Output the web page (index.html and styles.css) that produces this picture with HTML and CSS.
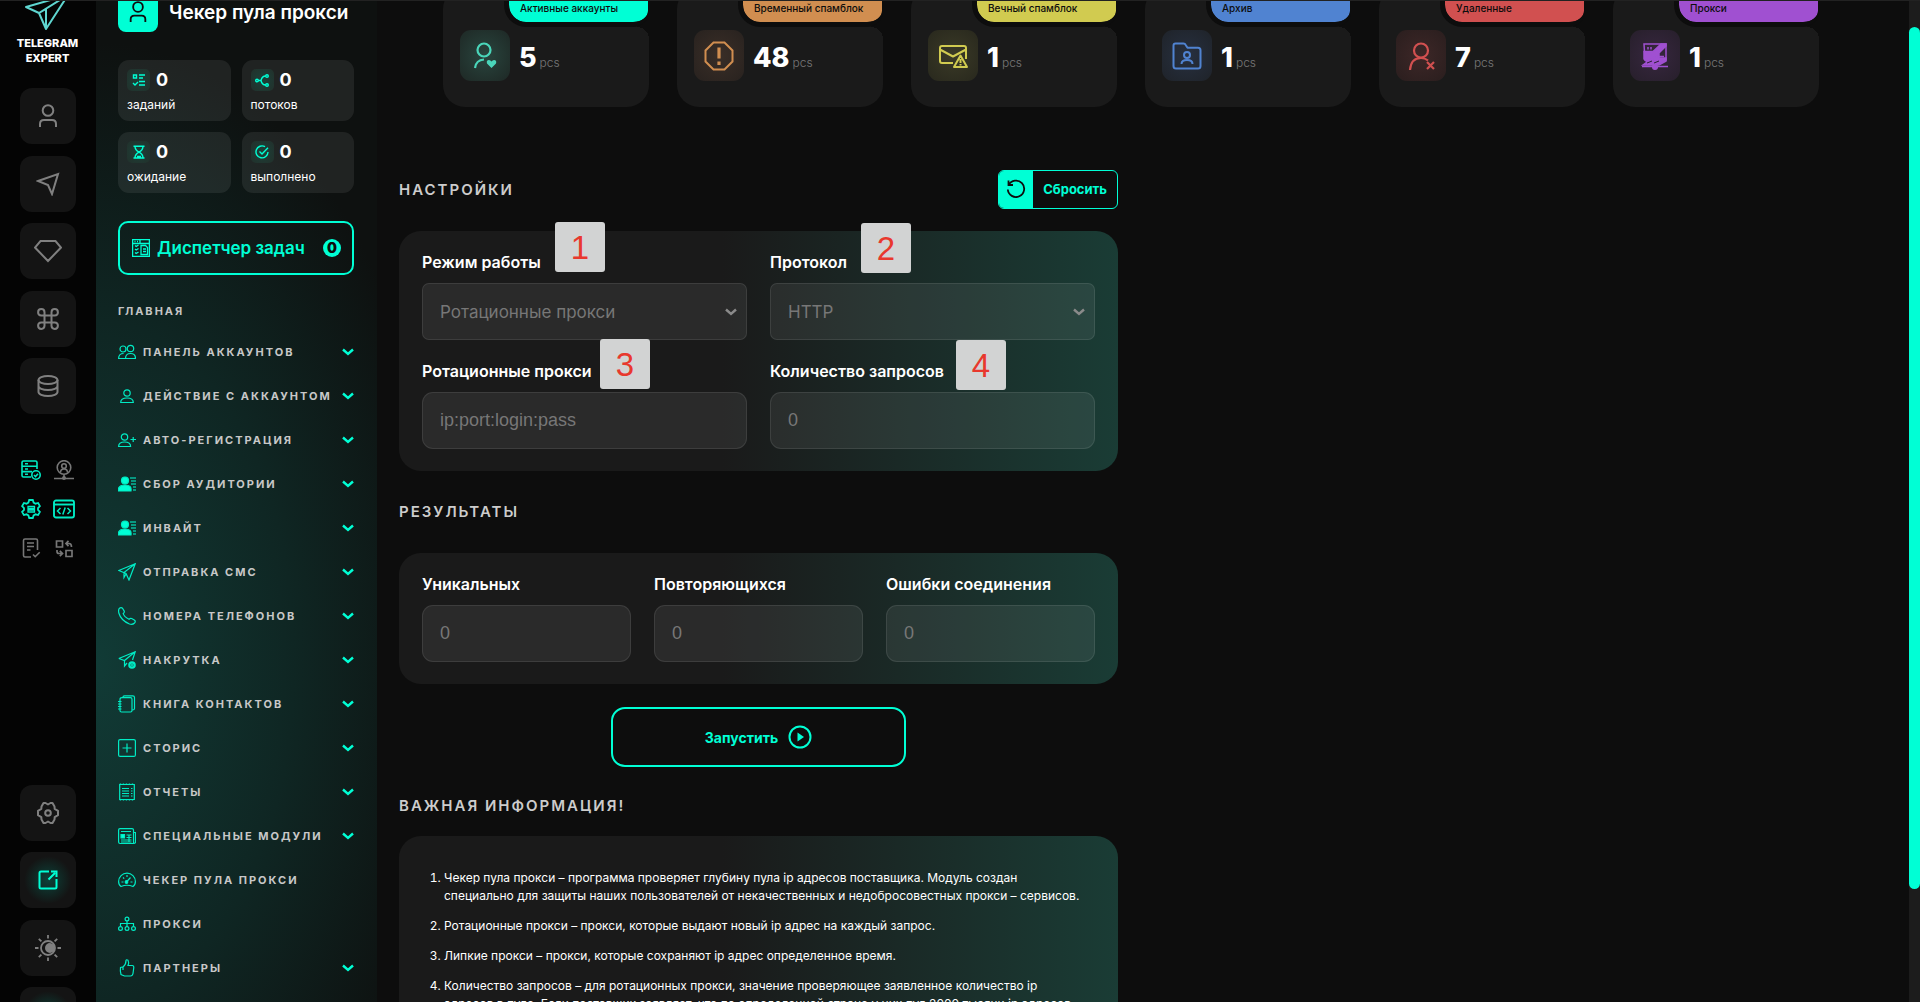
FILE: index.html
```html
<!DOCTYPE html>
<html lang="ru">
<head>
    <meta charset="UTF-8">
    <meta name="viewport" content="width=device-width, initial-scale=1.0">
    <title>Чекер пула прокси</title>
    <link rel="stylesheet" href="styles.css">
</head>
<body>

<!-- shared icons -->
<svg class="sprite" aria-hidden="true">
    <symbol id="chevron" viewBox="0 0 12 8"><path d="M1 1.5l5 4.500 5-4.500" fill="none" stroke="currentColor" stroke-width="2.400"/></symbol>
    <symbol id="user" viewBox="0 0 24 24"><circle cx="12" cy="6.500" r="5.300" fill="none" stroke="currentColor" stroke-width="2"/><path d="M4 23v-3q0-4 4-4h8q4 0 4 4v3" fill="none" stroke="currentColor" stroke-width="2"/></symbol>
    <symbol id="audience" viewBox="0 0 18 18"><circle cx="7" cy="5.500" r="3.500" fill="currentColor"/><path d="M0 16q0-6 7-6t6 6z" fill="currentColor"/><path d="M12 3h6M13 6h5M13 9h5M15 12h3M15 15h3" stroke="currentColor" stroke-width="1.200"/></symbol>
</svg>

<div class="app">
    <aside class="rail">
        <a href="#" class="logo">
            <svg width="44" height="38" viewBox="0 0 44 38" fill="none" stroke="#5fd6d0" stroke-width="2" stroke-linejoin="round"><path d="M1 14L43 2 21 36 14 20zM14 20L43 2M14 20l7-4v20"/></svg>
            <span>TELEGRAM<br>EXPERT</span>
        </a>
        <nav class="rail-group">
            <button class="rail-btn" aria-label="Аккаунты"><svg width="24" height="24"><use href="#user"/></svg></button>
            <button class="rail-btn" aria-label="Отправка"><svg width="24" height="24" viewBox="0 0 24 24" fill="none" stroke="currentColor" stroke-width="2"><path d="M2 9L22 2l-6 20-4-9z"/></svg></button>
            <button class="rail-btn" aria-label="Премиум"><svg width="28" height="24" viewBox="0 0 28 24" fill="none" stroke="currentColor" stroke-width="2"><path d="M6.500 2h15L27 8.500 14 22 1 8.500z"/></svg></button>
            <button class="rail-btn" aria-label="Команды"><svg width="24" height="24" viewBox="0 0 24 24" fill="none" stroke="currentColor" stroke-width="2"><path d="M8.500 5.200A3.200 3.200 0 1 0 5.200 8.500h13.600A3.200 3.200 0 1 0 15.500 5.200v13.600a3.200 3.200 0 1 0 3.300-3.300H5.200A3.200 3.200 0 1 0 8.500 18.800z"/></svg></button>
            <button class="rail-btn" aria-label="База данных"><svg width="24" height="24" viewBox="0 0 24 24" fill="none" stroke="currentColor" stroke-width="2"><ellipse cx="12" cy="6" rx="9.500" ry="4"/><path d="M2.500 6v6c0 2.200 4.200 4 9.500 4s9.500-1.800 9.500-4V6M2.500 12v6c0 2.200 4.200 4 9.500 4s9.500-1.800 9.500-4v-6"/></svg></button>
        </nav>
        <nav class="rail-tools">
            <button class="tool on" aria-label="Серверы"><svg width="20" height="20" viewBox="0 0 20 20" fill="none" stroke="currentColor" stroke-width="1.600"><path d="M16 9V2.500q0-1.500-1.500-1.500h-12Q1 1 1 2.500v13Q1 17 2.500 17H10M1 6.300h15M1 11.600h10M4 3.700h3M4 9h3M4 14.300h3"/><circle cx="15" cy="15" r="4.200"/><path d="M13 15l1.500 1.500L17 13.800"/></svg></button>
            <button class="tool" aria-label="Прокси"><svg width="20" height="20" viewBox="0 0 20 20" fill="none" stroke="currentColor" stroke-width="1.600"><circle cx="10" cy="7.500" r="6.800"/><circle cx="10" cy="6" r="2.300"/><path d="M6.500 12.500q0-3.500 3.500-3.500t3.500 3.500M10 14.500V18M0 18.500h20"/><circle cx="10" cy="18" r="1.200"/></svg></button>
            <button class="tool on" aria-label="Настройки сервера"><svg width="20" height="20" viewBox="0 0 20 20" fill="none" stroke="currentColor" stroke-width="1.800"><path d="M8.200 1h3.600l.8 2.600 1.900 1.100 2.600-.7 1.800 3.100L17 9v2l1.900 1.900-1.800 3.100-2.600-.7-1.900 1.100-.8 2.600H8.200l-.8-2.600-1.900-1.100-2.600.7-1.800-3.100L3 11V9L1.100 7.100 2.900 4l2.600.7 1.900-1.100z"/><path d="M7 7.500h6.500v2H7zM7 11h6.500v2H7z" stroke-width="1.300"/></svg></button>
            <button class="tool on" aria-label="Код"><svg width="22" height="20" viewBox="0 0 22 20" fill="none" stroke="currentColor" stroke-width="1.900"><rect x="1" y="1.500" width="20" height="17" rx="2"/><path d="M1 5.500h20"/><path d="M7.500 9L4.500 12l3 3M14.500 9l3 3-3 3M12.200 8.500l-2.400 7" stroke-width="1.500"/></svg></button>
            <button class="tool" aria-label="Задания"><svg width="20" height="20" viewBox="0 0 20 20" fill="none" stroke="currentColor" stroke-width="1.600"><path d="M16.500 12V2.500Q16.500 1 15 1H4Q2.500 1 2.500 2.500v15Q2.500 19 4 19h6M6 5h7M6 8.500h7M6 12h3.500M12 16.500l2.200 2.200 4.500-4.500"/></svg></button>
            <button class="tool" aria-label="Обмен"><svg width="20" height="20" viewBox="0 0 20 20" fill="none" stroke="currentColor" stroke-width="1.700"><path d="M2.500 3h6v6h-6zM12 12.500h6v6h-6zM12 5.500h3q2.500 0 2.500 3.500M14.500 2.800L12 5.500l2.500 2.700M3 12v1.500q0 2 2 2h3M5.800 12.800L8.500 15.500l-2.700 2.700"/></svg></button>
        </nav>
        <nav class="rail-group rail-bottom">
            <button class="rail-btn" aria-label="Настройки"><svg width="24" height="24" viewBox="0 0 24 24" fill="none" stroke="currentColor" stroke-width="2" stroke-linejoin="round"><path d="M7.500 2h2l2.500 1.500L14.500 2h2L18.500 5.500l.2 2.300 3.300 2v4.400l-3.300 2-.2 2.300L16.500 22h-2L12 20.500 9.500 22h-2L5.500 18.500l-.2-2.300L2 14.200V9.800l3.300-2 .2-2.300z"/><circle cx="12" cy="12" r="2.800"/></svg></button>
            <button class="rail-btn glow" aria-label="Открыть"><svg width="20" height="20" viewBox="0 0 20 20" fill="none" stroke="currentColor" stroke-width="2"><path d="M11 1.500H3Q1.500 1.500 1.500 3v14Q1.500 18.500 3 18.500h14q1.500 0 1.500-1.500V9M10.500 9.500L17 3M13 1.500h5.500V7"/></svg></button>
            <button class="rail-btn" aria-label="Тема"><svg width="26" height="26" viewBox="0 0 26 26" fill="none" stroke="currentColor" stroke-width="1.800"><circle cx="13" cy="13" r="7"/><path d="M15 8a5 5 0 1 0 0 10q5-1 5-5t-5-5z" fill="currentColor" stroke="none"/><path d="M13 0v3.500M13 22.500V26M0 13h3.500M22.500 13H26M3.800 3.800l2.600 2.600M19.600 19.600l2.600 2.600M22.200 3.800l-2.600 2.600M6.400 19.600l-2.600 2.600"/></svg></button>
            <button class="rail-btn glow" aria-label="Выход"></button>
        </nav>
    </aside>

    <aside class="sidebar">
        <div class="side-title">
            <span class="side-icon"><svg width="22" height="22"><use href="#user"/></svg></span>
            <h1>Чекер пула прокси</h1>
        </div>
        <div class="counters">
            <div class="counter">
                <div><span class="counter-icon"><svg width="14" height="14" viewBox="0 0 14 14" fill="none" stroke="currentColor" stroke-width="1.400"><path d="M1.500 2h3v3h-3zM7 2h6M7 5h4M7 8.500h6M7 12h6M1 10l2 2 3-3"/></svg></span><b>0</b></div>
                <span>заданий</span>
            </div>
            <div class="counter">
                <div><span class="counter-icon"><svg width="14" height="14" viewBox="0 0 14 14" fill="none" stroke="currentColor" stroke-width="1.400"><circle cx="2" cy="7.500" r="1.300"/><circle cx="12" cy="3" r="1.300"/><circle cx="12" cy="12" r="1.300"/><path d="M3.300 7.500H6Q7 3 10.700 3M6 7.500Q7 12 10.700 12"/></svg></span><b>0</b></div>
                <span>потоков</span>
            </div>
            <div class="counter">
                <div><span class="counter-icon"><svg width="14" height="14" viewBox="0 0 14 14" fill="none" stroke="currentColor" stroke-width="1.400"><path d="M1.500 1.200h11M1.500 13h11M3 1.200q0 3.800 4 5.900 4-2.100 4-5.900M3 13q0-3.800 4-5.900 4 2.100 4 5.900M5 11.500h4"/></svg></span><b>0</b></div>
                <span>ожидание</span>
            </div>
            <div class="counter">
                <div><span class="counter-icon"><svg width="14" height="14" viewBox="0 0 14 14" fill="none" stroke="currentColor" stroke-width="1.400"><path d="M10 1.700A6 6 0 1 0 13 7M4.500 6.500l2.500 2.500L13 2.800"/></svg></span><b>0</b></div>
                <span>выполнено</span>
            </div>
        </div>
        <button class="task-btn">
            <svg width="18" height="18" viewBox="0 0 18 18" fill="none" stroke="currentColor" stroke-width="1.300"><path d="M.6.600h16.800v16.800H.600zM.6 4.500h16.800M2.500 2.500h1M5 2.500h1M7.500 2.500h1M3 6.500l1.200 1L6.500 6M3 10l1.200 1 2.300-1.500M3 13.500l1.200 1L6.500 13M9 6.500h4.500l2 2v7H9zM11 10h3M11 12.500h3M8 .6v3.900"/></svg>
            <span>Диспетчер задач</span>
            <b class="badge">0</b>
        </button>
        <h2 class="menu-title">ГЛАВНАЯ</h2>
        <ul class="menu">
            <li><button><svg class="ico" viewBox="0 0 18 18"><circle cx="5" cy="6" r="3"/><circle cx="12.500" cy="5.500" r="3.200"/><path d="M8 15.500H.6q0-5 5-5M7.500 15.500q0-5 5-5t5 5z"/></svg><span>ПАНЕЛЬ АККАУНТОВ</span><svg class="chev"><use href="#chevron"/></svg></button></li>
            <li><button><svg class="ico" viewBox="0 0 18 18"><circle cx="9" cy="6" r="3.200"/><path d="M2.700 15.500q0-4.500 6.300-4.500t6.300 4.500z"/></svg><span>ДЕЙСТВИЕ С АККАУНТОМ</span><svg class="chev"><use href="#chevron"/></svg></button></li>
            <li><button><svg class="ico" viewBox="0 0 18 18"><circle cx="6.500" cy="6" r="3.200"/><path d="M.6 15.500q0-4.500 6-4.500t6 4.500zM12.500 8.500H18M15.200 6v5"/></svg><span>АВТО-РЕГИСТРАЦИЯ</span><svg class="chev"><use href="#chevron"/></svg></button></li>
            <li><button><svg class="ico"><use href="#audience"/></svg><span>СБОР АУДИТОРИИ</span><svg class="chev"><use href="#chevron"/></svg></button></li>
            <li><button><svg class="ico"><use href="#audience"/></svg><span>ИНВАЙТ</span><svg class="chev"><use href="#chevron"/></svg></button></li>
            <li><button><svg class="ico" viewBox="0 0 18 18"><path d="M.8 7.500L17.200.8 11 17 8 10.500zM17.200.8L6 9.500v5L8 11"/></svg><span>ОТПРАВКА СМС</span><svg class="chev"><use href="#chevron"/></svg></button></li>
            <li><button><svg class="ico" viewBox="0 0 18 18"><path d="M1.200 1.500q2-1.600 3.500 0l1.500 2.600q.5 1.200-1 2.400.6 3 5.800 5.800 1.400-1.500 2.600-.8l2.700 1.500q1.800 1.300.2 3-2 2-5 1Q3 13.500.8 6q-.6-3 .4-4.500z"/></svg><span>НОМЕРА ТЕЛЕФОНОВ</span><svg class="chev"><use href="#chevron"/></svg></button></li>
            <li><button><svg class="ico" viewBox="0 0 18 18"><path d="M.8 7.500L17.200.8 14.500 9M.8 7.500L6.500 9.500 17.200.8M6.500 9.500V15L9 12"/><circle cx="14" cy="14" r="2.700" stroke-width="2.200"/><path d="M12.500 14h3M14 12.500v3"/></svg><span>НАКРУТКА</span><svg class="chev"><use href="#chevron"/></svg></button></li>
            <li><button><svg class="ico" viewBox="0 0 18 18"><path d="M4 2.700h8.500q1.500 0 1.500 1.500V15.500q0 1.500-1.500 1.500H3.500Q2 17 2 15.500V4.500Q2 2.700 4 2.700zM5 2.500Q5 .8 6.500.8h8.300q1.700 0 1.700 1.700v11q0 1.500-2 1.500M0 6.500h3.500M0 9h3.500M0 11.500h3.500M0 14h3.500"/></svg><span>КНИГА КОНТАКТОВ</span><svg class="chev"><use href="#chevron"/></svg></button></li>
            <li><button><svg class="ico" viewBox="0 0 18 18"><rect x=".6" y=".6" width="16.800" height="16.800" rx="1.500"/><path d="M9 4.500v9M4.500 9h9"/></svg><span>СТОРИС</span><svg class="chev"><use href="#chevron"/></svg></button></li>
            <li><button><svg class="ico" viewBox="0 0 18 18"><path d="M1.700 1.500h14.600v15H1.700zM4 5.500h7M4 8h7M4 10.500h7M4 13h7M13 5.500h1.500M13 8h1.500M13 10.500h1.500M13 13h1.500"/><path d="M1.700 1h15M1.700 17h15" stroke-dasharray="1.500 1.500"/></svg><span>ОТЧЕТЫ</span><svg class="chev"><use href="#chevron"/></svg></button></li>
            <li><button><svg class="ico" viewBox="0 0 18 18"><path d="M15.500 16.500H2q-1.400 0-1.400-1.400V3Q.6 1.600 2 1.600h12q1.500 0 1.500 1.500zM15.500 5.500h2v9.500q0 1.500-2 1.500M3 4.500h10M8.500 8h5M8.500 10.500h5M3 13h10.500M3 15h10.500M11 7.500V15"/><path d="M3 7.500h3.500V11H3z" fill="currentColor"/></svg><span>СПЕЦИАЛЬНЫЕ МОДУЛИ</span><svg class="chev"><use href="#chevron"/></svg></button></li>
            <li><a href="#"><svg class="ico" viewBox="0 0 18 18"><path d="M3 15.500Q.6 14 .6 10.500a8.400 8.400 0 0 1 16.800 0Q17.400 14 15 15.500q-6-2.500-12 0zM8 11.500l4.500-5M9 4v2M3.500 11h2M12.500 11h2M5 6.500l1.200 1.200"/><circle cx="8.500" cy="11" r="1.300" fill="currentColor"/></svg><span>ЧЕКЕР ПУЛА ПРОКСИ</span></a></li>
            <li><a href="#"><svg class="ico" viewBox="0 0 18 18"><circle cx="9" cy="4" r="1.900"/><circle cx="2.500" cy="13.500" r="1.900"/><circle cx="9" cy="13.500" r="1.900"/><circle cx="15.500" cy="13.500" r="1.900"/><path d="M9 6v5.500M2.500 11V8.500h13V11"/></svg><span>ПРОКСИ</span></a></li>
            <li><button><svg class="ico" viewBox="0 0 18 18"><path d="M5 8Q8 5.500 8 1.500 8.500.200 10 1.200q1.200 2 0 5.300h4.500q1.500.3 1.300 2l-.8 6q-.5 2.500-2.500 2.500H6.500L3 15.500Q2 12 2.500 8.500L5 8v3"/></svg><span>ПАРТНЕРЫ</span><svg class="chev"><use href="#chevron"/></svg></button></li>
        </ul>
    </aside>

    <main class="main">
        <div class="stats">
            <div class="stat mint">
                <span class="stat-label">Активные аккаунты</span>
                <span class="stat-icon"><svg width="30" height="30" viewBox="0 0 30 30" fill="none" stroke="currentColor" stroke-width="2.200"><circle cx="14" cy="9" r="6.500"/><path d="M5 27q1-8 9-8.500"/><path d="M21.500 27l-4.500-4.500q-1-3.500 2-3.500 1.500 0 2.500 1.500 1-1.500 2.500-1.500 3 0 2 3.500z" fill="currentColor" stroke="none"/></svg></span>
                <strong>5</strong><small>pcs</small>
            </div>
            <div class="stat orange">
                <span class="stat-label">Временный спамблок</span>
                <span class="stat-icon"><svg width="30" height="30" viewBox="0 0 30 30" fill="none" stroke="currentColor" stroke-width="2"><path d="M9.500 1.500h11l8 8v11l-8 8h-11l-8-8v-11z"/><path d="M15 6.500v11M15 20.500v3.500" stroke-width="3.200"/></svg></span>
                <strong>48</strong><small>pcs</small>
            </div>
            <div class="stat yellow">
                <span class="stat-label">Вечный спамблок</span>
                <span class="stat-icon"><svg width="30" height="30" viewBox="0 0 30 30" fill="none" stroke="currentColor" stroke-width="2" stroke-linejoin="round"><path d="M15 22H4q-2 0-2-2V7q0-2 2-2h22q2 0 2 2v11M2 8.500l13 7 13-7"/><path d="M22.500 14.500L29 26H16zM22.500 18v4M22.500 23v1.500"/></svg></span>
                <strong>1</strong><small>pcs</small>
            </div>
            <div class="stat blue">
                <span class="stat-label">Архив</span>
                <span class="stat-icon"><svg width="30" height="30" viewBox="0 0 30 30" fill="none" stroke="currentColor" stroke-width="2" stroke-linejoin="round"><path d="M3.500 2.500h8q1.500 0 2 1.200l2 3H26q2.500 0 2.500 2.500V25q0 2.500-2.500 2.500H4Q1.500 27.500 1.500 25V4.500q0-2 2-2z"/><circle cx="15" cy="14" r="3"/><path d="M9.500 23q0-4 5.500-4t5.500 4"/></svg></span>
                <strong>1</strong><small>pcs</small>
            </div>
            <div class="stat red">
                <span class="stat-label">Удаленные</span>
                <span class="stat-icon"><svg width="30" height="30" viewBox="0 0 30 30" fill="none" stroke="currentColor" stroke-width="2.200"><circle cx="15" cy="9.500" r="7"/><path d="M4 29q1-12 11-12 4 0 7 2.500M21 21l7 7M28 21l-7 7"/></svg></span>
                <strong>7</strong><small>pcs</small>
            </div>
            <div class="stat purple">
                <span class="stat-label">Прокси</span>
                <span class="stat-icon"><svg width="30" height="30" viewBox="0 0 30 30" fill="none" stroke="currentColor" stroke-width="1.500"><path d="M4 3h22v16H5z"/><path d="M4 10.500h9L21 3h5v2l-7 7v5h7v3l-7 4H3l4-3-3-3z" fill="currentColor"/><path d="M8 6v2.500M11 6v2.500M19 15.500h5M9 19l9-4" /><path d="M2 25.500h26" /><circle cx="15" cy="26" r="2.300" fill="currentColor"/><path d="M7 22l5-2M14 22l5-2" stroke="#2c2034" stroke-width="1"/></svg></span>
                <strong>1</strong><small>pcs</small>
            </div>
        </div>

        <div class="columns">
            <form class="column">
                <div class="section-head">
                    <h2>НАСТРОЙКИ</h2>
                    <button type="reset" class="reset-btn">
                        <span class="reset-icon"><svg width="20" height="20" viewBox="0 0 20 20" fill="none" stroke="currentColor" stroke-width="1.800"><path d="M2.500 1.500v4.500H7M2.700 6A8.200 8.200 0 1 1 1.800 10.500"/></svg></span>
                        <span class="reset-text">Сбросить</span>
                    </button>
                </div>
                <div class="panel fields two">
                    <div class="field">
                        <label for="mode">Режим работы</label>
                        <div class="select">
                            <select id="mode"><option>Ротационные прокси</option></select>
                            <svg class="chev"><use href="#chevron"/></svg>
                        </div>
                    </div>
                    <div class="field">
                        <label for="protocol">Протокол</label>
                        <div class="select">
                            <select id="protocol"><option>HTTP</option></select>
                            <svg class="chev"><use href="#chevron"/></svg>
                        </div>
                    </div>
                    <div class="field">
                        <label for="proxy">Ротационные прокси</label>
                        <input type="text" id="proxy" placeholder="ip:port:login:pass">
                    </div>
                    <div class="field">
                        <label for="count">Количество запросов</label>
                        <input type="text" id="count" placeholder="0">
                    </div>
                    <span class="marker marker-mode">1</span>
                    <span class="marker marker-protocol">2</span>
                    <span class="marker marker-proxy">3</span>
                    <span class="marker marker-count">4</span>
                </div>

                <div class="section-head"><h2>РЕЗУЛЬТАТЫ</h2></div>
                <div class="panel fields three">
                    <div class="field">
                        <label for="unique">Уникальных</label>
                        <input type="text" id="unique" placeholder="0" readonly>
                    </div>
                    <div class="field">
                        <label for="repeat">Повторяющихся</label>
                        <input type="text" id="repeat" placeholder="0" readonly>
                    </div>
                    <div class="field">
                        <label for="errors">Ошибки соединения</label>
                        <input type="text" id="errors" placeholder="0" readonly>
                    </div>
                </div>

                <button type="button" class="start-btn">
                    Запустить
                    <svg width="24" height="24" viewBox="0 0 24 24"><circle cx="12" cy="12" r="10.500" fill="none" stroke="currentColor" stroke-width="2"/><path d="M9.500 7.500l6.500 4.500-6.500 4.500z" fill="currentColor"/></svg>
                </button>

                <div class="section-head info-head"><h2>ВАЖНАЯ ИНФОРМАЦИЯ!</h2></div>
                <div class="panel info">
                    <ol>
                        <li>Чекер пула прокси – программа проверяет глубину пула ip адресов поставщика. Модуль создан специально для защиты наших пользователей от некачественных и недобросовестных прокси – сервисов.</li>
                        <li>Ротационные прокси – прокси, которые выдают новый ip адрес на каждый запрос.</li>
                        <li>Липкие прокси – прокси, которые сохраняют ip адрес определенное время.</li>
                        <li>Количество запросов – для ротационных прокси, значение проверяющее заявленное количество ip адресов в пуле. Если поставщик заявляет, что по определенной стране у них пул 2000 тысячи ip адресов</li>
                    </ol>
                </div>
            </form>
        </div>
    </main>

    <div class="scrollbar"><div class="thumb"></div></div>
</div>

</body>
</html>
```
FILE: styles.css
```css
* {
    box-sizing: border-box;
}
body {
    margin: 0;
    background: #0d0d0d;
    color: #fff;
    font-family: Inter, "Noto Sans", sans-serif;
    font-size: 12px;
}
h1, h2, ul, ol {
    margin: 0;
    padding: 0;
}
button, input, select {
    font: inherit;
    color: inherit;
    background: none;
    border: 0;
    padding: 0;
}
button {
    cursor: pointer;
}
a {
    color: inherit;
    text-decoration: none;
}
svg {
    flex-shrink: 0;
}
.sprite {
    display: none;
}
.app {
    display: flex;
    height: 100vh;
    overflow: hidden;
    border-top: 1px solid #222;
}

/* left icon rail */
.rail {
    width: 96px;
    flex-shrink: 0;
    padding-right: 1px;
    background: #040404;
    display: flex;
    flex-direction: column;
    align-items: center;
    overflow: hidden;
}
.logo {
    margin-top: -8px;
    text-align: center;
    font-size: 11px;
    font-weight: 800;
    line-height: 15px;
}
.logo svg {
    display: block;
    margin: 0 auto 5px;
}
.rail-group {
    display: flex;
    flex-direction: column;
    justify-content: space-between;
    flex-shrink: 0;
    height: 326px;
    margin-top: 22px;
}
.rail-btn {
    width: 56px;
    height: 56px;
    border-radius: 12px;
    background: #141414;
    color: #808080;
    display: flex;
    align-items: center;
    justify-content: center;
}
.rail-btn.glow {
    color: #00ffd5;
    background: radial-gradient(circle, #0c4239, #141414 60%);
}
.rail-tools {
    display: grid;
    grid-template-columns: 22px 22px;
    justify-items: center;
    column-gap: 11px;
    row-gap: 19px;
    margin-top: 46px;
    padding-right: 1px;
}
.tool {
    height: 20px;
    color: #777;
}
.tool.on {
    color: #00ebc4;
}
.rail-bottom {
    height: 258px;
    margin-top: 227px;
}

/* sidebar */
.sidebar {
    width: 281px;
    flex-shrink: 0;
    padding: 0 23px 0 22px;
    overflow: hidden;
    background: radial-gradient(ellipse 360px 620px at 0 66%, #113b36, #0f2623 55%, #0e1110);
}
.side-title {
    display: flex;
    align-items: center;
    gap: 11px;
    margin-top: -9px;
}
.side-icon {
    width: 40px;
    height: 40px;
    border-radius: 8px;
    background: #00ffd5;
    color: #0d0d0d;
    display: flex;
    align-items: center;
    justify-content: center;
}
.side-title h1 {
    font-size: 19px;
    font-weight: 600;
    white-space: nowrap;
}
.counters {
    display: grid;
    grid-template-columns: 1fr 1fr;
    gap: 11px;
    margin-top: 28px;
}
.counter {
    height: 61px;
    padding: 9px;
    border-radius: 11px;
    background: rgba(255, 255, 255, 0.08);
    font-size: 12px;
    line-height: 15px;
}
.counter div {
    display: flex;
    align-items: center;
    gap: 6px;
    margin-bottom: 6px;
}
.counter b {
    font-size: 18px;
    line-height: 22px;
    font-weight: 700;
}
.counter-icon {
    width: 23px;
    height: 22px;
    border-radius: 5px;
    background: radial-gradient(circle, #1c4038, #22302b);
    color: #00ffd5;
    display: flex;
    align-items: center;
    justify-content: center;
}
.task-btn {
    width: 100%;
    height: 54px;
    margin-top: 28px;
    padding: 0 11px 0 12px;
    border: 2px solid #00ffd5;
    border-radius: 10px;
    color: #00ffd5;
    font-size: 17px;
    font-weight: 600;
    display: flex;
    align-items: center;
    gap: 7px;
    white-space: nowrap;
}
.badge {
    width: 18px;
    height: 18px;
    margin-left: auto;
    border-radius: 50%;
    background: #00ffd5;
    color: #0d0d0d;
    font-size: 14px;
    line-height: 18px;
}
.menu-title {
    margin: 28px 0 11px;
    font-size: 11px;
    line-height: 16px;
    font-weight: 700;
    letter-spacing: 2px;
    color: #c5c5c5;
}
.menu {
    list-style: none;
}
.menu button, .menu a {
    width: 100%;
    height: 44px;
    display: flex;
    align-items: center;
    gap: 7px;
    font-size: 11px;
    font-weight: 700;
    letter-spacing: 2px;
    color: #c8c8c8;
    white-space: nowrap;
}
.ico {
    width: 18px;
    height: 18px;
    fill: none;
    stroke: #00ebc4;
    stroke-width: 1.2;
    color: #00ffd5;
}
.chev {
    width: 12px;
    height: 8px;
    margin-left: auto;
    color: #00ffd5;
}

/* main area */
.main {
    flex: 1;
    min-width: 0;
    padding: 0 22px;
}
.stats {
    display: grid;
    grid-template-columns: repeat(6, 1fr);
    gap: 28px;
    margin: -14px 68px 0 44px;
}
.stat {
    position: relative;
    isolation: isolate;
    height: 120px;
    padding: 43px 17px 0;
    border-radius: 22px;
    background: #1a1a1a;
    display: flex;
    align-items: flex-start;
}
/* coloured tab sitting in a notch of the card */
.stat-label {
    position: absolute;
    top: 0;
    right: 0;
    width: 145px;
    height: 40px;
    padding: 12px 0 0 11px;
    border: solid #0d0d0d;
    border-width: 0 1px 5px 5px;
    border-radius: 0 0 16px 22px;
    background: var(--c);
    background-clip: padding-box;
    color: #0d0d0d;
    font-size: 10px;
    line-height: 18px;
    font-weight: 500;
}
.stat::after {
    content: "";
    position: absolute;
    top: 24px;
    right: 0;
    width: 12px;
    height: 28px;
    background: radial-gradient(circle at 0 100%, transparent 12px, #0d0d0d 12px);
    z-index: -1;
}
.stat-icon {
    width: 50px;
    height: 51px;
    margin-right: 9px;
    border-radius: 11px;
    color: var(--c);
    background: radial-gradient(circle, var(--glow), var(--edge));
    display: flex;
    align-items: center;
    justify-content: center;
}
.stat strong {
    font-size: 27px;
    line-height: 55px;
    font-weight: 800;
}
.stat small {
    margin-left: 3px;
    font-size: 12px;
    line-height: 66px;
    font-weight: 300;
    color: #777;
}
.mint { --c: #00ffd5; --glow: #29453e; --edge: #1e2825; }
.mint .stat-icon { color: #4ad6ba; }
.orange { --c: #d18e50; --glow: #3a2e27; --edge: #28221f; }
.yellow { --c: #d1cb50; --glow: #3b3a27; --edge: #28281d; }
.blue { --c: #5083d1; --glow: #273040; --edge: #1f2329; }
.red { --c: #d15050; --glow: #3d2727; --edge: #2a1e1e; }
.purple { --c: #a050d1; --glow: #37273f; --edge: #271f2b; }

.columns {
    display: grid;
    grid-template-columns: 1fr 1fr;
    gap: 50px;
    margin-top: 56px;
}
.column {
    display: flex;
    flex-direction: column;
}
.section-head {
    height: 52px;
    margin-bottom: 16px;
    display: flex;
    align-items: center;
    justify-content: space-between;
}
.section-head h2 {
    padding-top: 2px;
    font-size: 15px;
    line-height: 20px;
    font-weight: 600;
    letter-spacing: 2px;
    color: #ccc;
}
.reset-btn {
    height: 39px;
    display: flex;
    border: 1px solid #00ffd5;
    border-radius: 6px;
    overflow: hidden;
    color: #00ffd5;
    font-size: 13px;
    font-weight: 700;
}
.reset-icon {
    width: 34px;
    height: 100%;
    background: #00ffd5;
    color: #0d0d0d;
    display: flex;
    align-items: center;
    justify-content: center;
}
.reset-text {
    padding: 0 10px;
    align-self: center;
}
.panel {
    position: relative;
    border-radius: 22px;
    background: linear-gradient(90deg, #1a1a1a 45%, #1a3c35);
}
.fields {
    display: grid;
    gap: 20px 23px;
    padding: 20px 23px 22px;
    margin-bottom: 14px;
}
.two {
    grid-template-columns: 1fr 1fr;
}
.three {
    grid-template-columns: 1fr 1fr 1fr;
    margin-bottom: 23px;
}
.field label {
    display: block;
    margin-bottom: 10px;
    font-size: 16px;
    line-height: 22px;
    font-weight: 600;
}
.field input, .field select {
    display: block;
    width: 100%;
    height: 57px;
    padding: 0 17px;
    border: 1px solid rgba(255, 255, 255, 0.09);
    border-radius: 11px;
    background: rgba(255, 255, 255, 0.07);
    color: #777;
    font-size: 17px;
    appearance: none;
}
.field input {
    font-family: "Liberation Sans", sans-serif;
    font-size: 18px;
}
.field select {
    border-radius: 7px;
}
.field input::placeholder {
    color: #777;
}
.select {
    position: relative;
}
.select .chev {
    position: absolute;
    right: 10px;
    top: 25px;
    color: #8a8a8a;
}
/* numbered callouts over the form */
.marker {
    position: absolute;
    width: 50px;
    height: 50px;
    border-radius: 3px;
    background: #d2d3d3;
    color: #e8382d;
    font: 33px/52px "Liberation Sans", sans-serif;
    text-align: center;
}
.marker-mode { left: 156px; top: -9px; }
.marker-protocol { left: 462px; top: -8px; }
.marker-proxy { left: 201px; top: 108px; }
.marker-count { left: 557px; top: 109px; }

.start-btn {
    align-self: center;
    width: 41%;
    height: 60px;
    border: 2px solid #00ffd5;
    border-radius: 14px;
    color: #00ffd5;
    font-size: 14px;
    font-weight: 700;
    display: flex;
    align-items: center;
    justify-content: center;
    gap: 10px;
}
.info-head {
    margin: 12px 0 5px;
}
.info {
    padding: 33px 35px 33px 45px;
    font-size: 12px;
    line-height: 18px;
}
.info li {
    margin-bottom: 12px;
}
.info li:last-child {
    margin-bottom: 0;
}

/* page scrollbar */
.scrollbar {
    width: 11px;
    flex-shrink: 0;
    padding-top: 26px;
    background: #1c1c1c;
}
.thumb {
    height: 86vh;
    border-radius: 6px;
    background: #00ffd5;
}
```
